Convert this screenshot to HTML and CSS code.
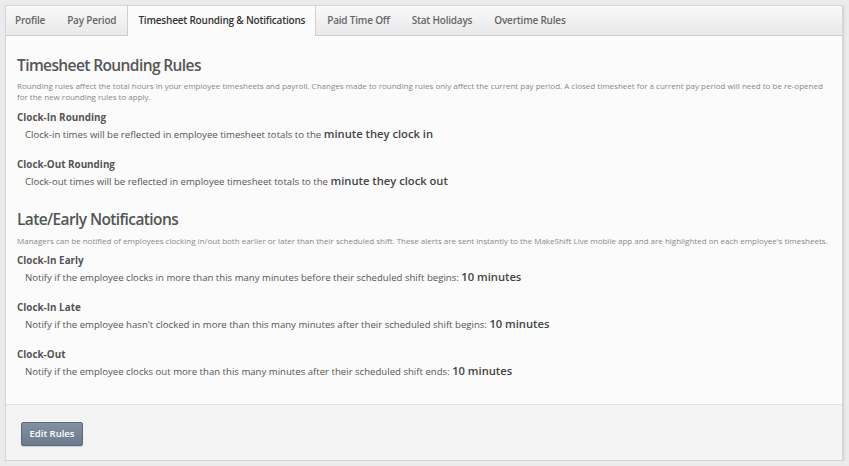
FILE: index.html
```html
<!DOCTYPE html>
<html>
<head>
<meta charset="utf-8">
<link rel="stylesheet" href="styles.css">
</head>
<body>
<div class="panel">
  <div class="tabs">
    <div class="tab">Profile</div>
    <div class="tab">Pay Period</div>
    <div class="tab active">Timesheet Rounding &amp; Notifications</div>
    <div class="tab">Paid Time Off</div>
    <div class="tab">Stat Holidays</div>
    <div class="tab">Overtime Rules</div>
  </div>
  <div class="content">
    <h2 class="title">Timesheet Rounding Rules</h2>
    <p class="desc">Rounding rules affect the total hours in your employee timesheets and payroll. Changes made to rounding rules only affect the current pay period. A closed timesheet for a current pay period will need to be re-opened<br>for the new rounding rules to apply.</p>
    <div class="rule">
      <h3 class="rule-name">Clock-In Rounding</h3>
      <p class="rule-text">Clock-in times will be reflected in employee timesheet totals to the <strong>minute they clock in</strong></p>
    </div>
    <div class="rule">
      <h3 class="rule-name">Clock-Out Rounding</h3>
      <p class="rule-text">Clock-out times will be reflected in employee timesheet totals to the <strong>minute they clock out</strong></p>
    </div>
    <h2 class="title second">Late/Early Notifications</h2>
    <p class="desc">Managers can be notified of employees clocking in/out both earlier or later than their scheduled shift. These alerts are sent instantly to the MakeShift Live mobile app and are highlighted on each employee's timesheets.</p>
    <div class="rule">
      <h3 class="rule-name">Clock-In Early</h3>
      <p class="rule-text">Notify if the employee clocks in more than this many minutes before their scheduled shift begins: <strong>10 minutes</strong></p>
    </div>
    <div class="rule">
      <h3 class="rule-name">Clock-In Late</h3>
      <p class="rule-text">Notify if the employee hasn't clocked in more than this many minutes after their scheduled shift begins: <strong>10 minutes</strong></p>
    </div>
    <div class="rule">
      <h3 class="rule-name">Clock-Out</h3>
      <p class="rule-text">Notify if the employee clocks out more than this many minutes after their scheduled shift ends: <strong>10 minutes</strong></p>
    </div>
  </div>
  <div class="footer">
    <button class="btn">Edit Rules</button>
  </div>
</div>
</body>
</html>
```
FILE: styles.css
```css
html, body {
  margin: 0;
  padding: 0;
}
body {
  background: #ebebeb;
  font-family: "Open Sans", "Liberation Sans", sans-serif;
  color: #555;
}
.panel {
  margin: 5px 0 0 5px;
  width: 836px;
  height: 454px;
  border: 1px solid #d6d6d6;
  box-shadow: 1px 1px 2px rgba(0,0,0,0.12);
  background: #fbfbfb;
  display: flex;
  flex-direction: column;
}
.tabs {
  display: flex;
  flex-shrink: 0;
  height: 29px;
  background: linear-gradient(#f9f9f9, #e9e9e9);
  border-bottom: 1px solid #cfcfcf;
}
.tab {
  padding: 0 11px;
  font-size: 10px;
  letter-spacing: -0.2px;
  font-weight: 600;
  color: #666;
  line-height: 29px;
}
.tab:first-child {
  padding-left: 9px;
}
.tab.active {
  padding: 0 10px;
  background: #fbfbfb;
  color: #333;
  border-left: 1px solid #cfcfcf;
  border-right: 1px solid #cfcfcf;
  height: 30px;
}
.content {
  flex: 1;
  padding: 17px 8px 0 11px;
}
.title {
  margin: 0;
  font-size: 15.5px;
  letter-spacing: -0.6px;
  font-weight: 600;
  color: #555;
  line-height: 24px;
}
.title.second {
  margin-top: 16px;
}
.desc {
  margin: 3px 0 7px;
  font-size: 8px;
  line-height: 11px;
  color: #888;
}
.title.second + .desc {
  margin-top: 4px;
  margin-bottom: 6px;
}
.rule {
  margin-bottom: 12px;
}
.rule-name {
  margin: 0;
  font-size: 9.9px;
  font-weight: 700;
  color: #555;
  line-height: 16px;
}
.rule-text {
  margin: 0;
  padding-left: 8px;
  font-size: 9.6px;
  color: #555;
  line-height: 18px;
}
.rule-text strong {
  font-size: 11.2px;
  font-weight: 600;
  color: #444;
}
.footer {
  box-sizing: border-box;
  flex-shrink: 0;
  height: 56px;
  border-top: 1px solid #e2e2e2;
  background: #f4f4f4;
  padding: 15px 0 0 15px;
}
.btn {
  width: 62px;
  height: 24px;
  padding: 0;
  border: 1px solid #5d6a79;
  border-radius: 2px;
  background: linear-gradient(#8190a1, #6b7b8d);
  color: #fff;
  font-family: "Open Sans", "Liberation Sans", sans-serif;
  font-size: 9.5px;
  font-weight: 600;
  box-shadow: 0 1px 1px rgba(0,0,0,0.15);
}
```
